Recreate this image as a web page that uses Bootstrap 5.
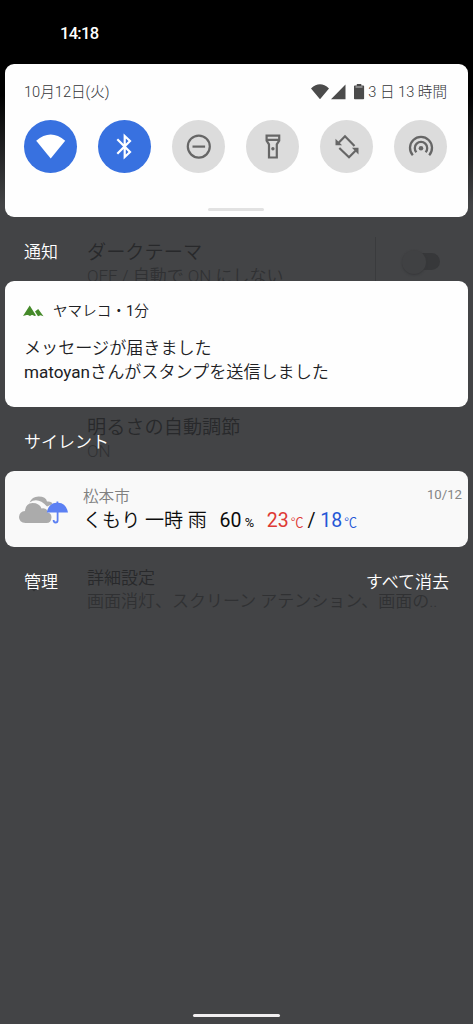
<!DOCTYPE html>
<html lang="ja">
<head>
<meta charset="utf-8">
<meta name="viewport" content="width=device-width, initial-scale=1">
<title>通知</title>
<link href="https://cdn.jsdelivr.net/npm/bootstrap@5.3.0/dist/css/bootstrap.min.css" rel="stylesheet">
<style>
  body { font-family: Roboto, "Noto Sans CJK JP", sans-serif; color: #202124; background: #434446; }
  .shade { height: 1024px; overflow: hidden; background: linear-gradient(#000 0, #000 95px, #434446 205px); }
  .status-bar { height: 64px; padding: 5px 0 0 60px; font-size: 16.5px; font-weight: 500; letter-spacing: -.7px; }
  .panel { border: 0; border-radius: 9px; margin: 0 5px; background: #fefefe; color: #202124; }
  .panel-qs { height: 153px; padding: 0 21px 0 19px; }
  .qs-head { height: 56px; padding-top: 1px; font-size: 14.6px; font-weight: 300; color: #333538; }
  .tile { width: 53px; height: 53px; background: #dcdcdc; color: #666; }
  .tile-on { background: #3871e0; color: #fff; }
  .grip { width: 56px; height: 3px; background: #e2e2e2; margin: 35px 0 0 184px; }
  .section-label { height: 64px; padding: 7px 24px 0; font-size: 17px; font-weight: 350; color: #fff; }
  .panel-msg { height: 126px; padding: 18px 19px 0; }
  .app-line { height: 26px; font-size: 14.6px; font-weight: 350; }
  .msg { font-size: 17.1px; line-height: 24px; margin-top: 11px; white-space: nowrap; font-weight: 350; }
  .latin { font-weight: 400; }
  .panel-weather { height: 76px; background: #f9f9f9; }
  .place { font-size: 15.6px; line-height: 20px; color: #808080; font-weight: 350; }
  .forecast { font-size: 19.5px; line-height: 28px; color: #0c0c0c; white-space: pre; }
  .forecast .jp { font-size: 19.1px; margin-right: 3px; font-weight: 350; }
  .unit { font-size: 12.8px; }
  .hot { color: #de3a35; margin: 0 -1px 0 3px; }
  .cold { color: #2557d6; }
  .cold .unit, .hot .unit { margin-left: -1px; font-weight: 350; }
  .stamp { font-size: 13.2px; color: #858585; }
  .home-bar { width: 87px; height: 3px; background: #f2f0f1; margin-bottom: 7px; }
  /* settings page dimmed behind the shade */
  .under { color: #28292b; white-space: nowrap; font-weight: 350; }
  .under div { position: absolute; left: 87px; }
  .u-title { font-size: 19.2px; line-height: 24px; }
  .u-sub { font-size: 17px; line-height: 22px; color: #303133; }
  .under .u-rule { left: 375px; top: 237px; width: 1px; height: 50px; background: #3a3b3d; }
  .under .u-track { left: 408px; top: 253px; width: 32px; height: 17px; border-radius: 9px; background: #37383a; }
  .under .u-knob { left: 402px; top: 250px; width: 24px; height: 24px; border-radius: 50%; background: #404143; box-shadow: 0 1px 2px #37383a; }
</style>
</head>
<body>
<div class="shade position-relative">
  <div class="under" aria-hidden="true">
    <div class="u-title" style="top:241px">ダークテーマ</div>
    <div class="u-sub" style="top:265px">OFF / 自動で ON にしない</div>
    <div class="u-rule"></div><div class="u-track"></div><div class="u-knob"></div>
    <div class="u-title" style="top:416px">明るさの自動調節</div>
    <div class="u-sub" style="top:440px">ON</div>
    <div class="u-sub" style="top:567px;color:#28292b">詳細設定</div>
    <div class="u-sub" style="top:590px">画面消灯、スクリーン アテンション、画面の..</div>
    <div style="left:28px;top:583px"><svg width="12" height="10" class="d-block" fill="none" stroke="#303133" stroke-width="2"><path d="M1 2l5 5 5-5"/></svg></div>
  </div>

  <div class="position-relative d-flex flex-column h-100">
    <header class="status-bar d-flex align-items-center text-white">14:18</header>

    <section class="card panel panel-qs">
      <div class="qs-head d-flex justify-content-between align-items-center">
        <span>10月12日(火)</span>
        <span class="d-flex align-items-center">
          <svg width="54" height="18" viewBox="0 0 54 18" fill="#4b4b4b" style="margin:-1px 3px 0 0"><path d="M0 5.400Q9-2.800 18 5.400L9 16.200zM20 16.200 34.500 1.600V16.200zM43 3.200q0-.8.8-.8h2V1h4.500v1.400h2q.8 0 .8.8v12.300q0 .8-.8.8h-8.500q-.8 0-.8-.8z"/><path d="M44.500 4h7" stroke="#aaa" stroke-width="1.300"/></svg>
          <span>3 日 13 時間</span>
        </span>
      </div>
      <div class="d-flex justify-content-between">
        <span class="tile tile-on rounded-circle"><svg width="53" height="53" fill="currentColor"><path d="M12.200 20.800Q26.700 8 41.200 20.800L26.700 38.500z"/></svg></span>
        <span class="tile tile-on rounded-circle"><svg width="53" height="53" fill="none" stroke="currentColor" stroke-width="2.200"><path d="M19.300 19.300 32 32l-5.300 5V16l5.300 5-12.700 12.700"/></svg></span>
        <span class="tile rounded-circle"><svg width="53" height="53" fill="none" stroke="currentColor" stroke-width="2.200"><circle cx="26.800" cy="26.600" r="11"/><path d="M20.500 26.600h12.600"/></svg></span>
        <span class="tile rounded-circle"><svg width="53" height="53" fill="none" stroke="currentColor" stroke-width="2.200"><path d="M20.600 15.700h12.600v5l-2.400 3.600v13.200h-7.800V24.300l-2.400-3.600zM20.600 19.800h12.600"/><circle cx="26.900" cy="28.800" r="1.700" fill="currentColor" stroke="none"/></svg></span>
        <span class="tile rounded-circle"><svg width="53" height="53" fill="none" stroke="currentColor" stroke-width="2.200"><path d="M34.500 26 25 16.300l-6.300 6.400M19.300 28 29 37.200l6.500-6.400"/><path d="M15.500 18.700v6.600h6.600zM38.500 27.800h-6.600l6.600 6.600z" fill="currentColor" stroke="none"/></svg></span>
        <span class="tile rounded-circle"><svg width="53" height="53" fill="none" stroke="currentColor" stroke-width="2.300"><path d="M18.800 35.300a11 11 0 1 1 16.400 0M22.400 32.300a6.200 6.200 0 1 1 9.200 0"/><circle cx="27" cy="28.200" r="2.300" fill="currentColor" stroke="none"/></svg></span>
      </div>
      <div class="grip rounded-pill"></div>
    </section>

    <div class="section-label d-flex align-items-center">通知</div>

    <section class="card panel panel-msg">
      <div class="app-line d-flex align-items-center">
        <svg width="21" height="12" viewBox="0 0 21 12" fill="#458a2a" style="margin:-3px 9px 0 -1px"><path d="M0 11 6.700.5 13 10.500 11.500 11 9 9.800 7 11 4.500 9.800zM12 6.500 15.200 4 20.500 11.200 17.500 10.300 15 11.200z"/><path d="M3 10 6.700 4 10.500 10z"/></svg>
        <span>ヤマレコ・<span class="latin">1</span>分</span>
      </div>
      <div class="msg">メッセージが届きました<br><span class="latin">matoyan</span>さんがスタンプを送信しました</div>
    </section>

    <div class="section-label d-flex align-items-center">サイレント</div>

    <section class="card panel panel-weather flex-row">
      <svg width="50" height="30" viewBox="0 0 50 30" class="flex-shrink-0" style="margin:24px 0 0 14px"><g fill="#ababab"><path d="M10.500 7.500Q13 1.500 19.500 1.500 27 1.500 28 6.500 33 6 33.500 9L28 11.500Q19 1.500 10.500 7.500z"/><path d="M6.500 28Q0 27.500 0 22 .5 16.500 6 16 6.500 8.500 13.500 8 20.500 8 22.500 13.500 28 12.500 28.500 17.500 32.500 18 32.500 22.500 32 28 27.500 28z"/></g><path d="M27.800 17.500Q29.500 8.200 37.500 7.700V6.500h1.800v1.200Q47.200 8.200 49 17.500z" fill="#5c80f3"/><path d="M38.600 16v9.500q0 2-2 2t-2-2.500" fill="none" stroke="#5c80f3" stroke-width="1.800"/></svg>
      <div class="flex-grow-1" style="padding:16px 0 0 14px">
        <div class="place">松本市</div>
        <div class="forecast"><span class="jp">くもり 一時 雨</span>  <span>60</span><span class="unit"> %</span>  <span class="hot">23<span class="unit"> ℃</span></span> / <span class="cold">18<span class="unit"> ℃</span></span></div>
      </div>
      <div class="stamp" style="padding:14px 6px 0 0">10/12</div>
    </section>

    <div class="section-label d-flex align-items-center justify-content-between"><span>管理</span><span>すべて消去</span></div>

    <div class="home-bar rounded-pill mt-auto mx-auto"></div>
  </div>
</div>
<script src="https://cdn.jsdelivr.net/npm/bootstrap@5.3.0/dist/js/bootstrap.bundle.min.js"></script>
</body>
</html>
